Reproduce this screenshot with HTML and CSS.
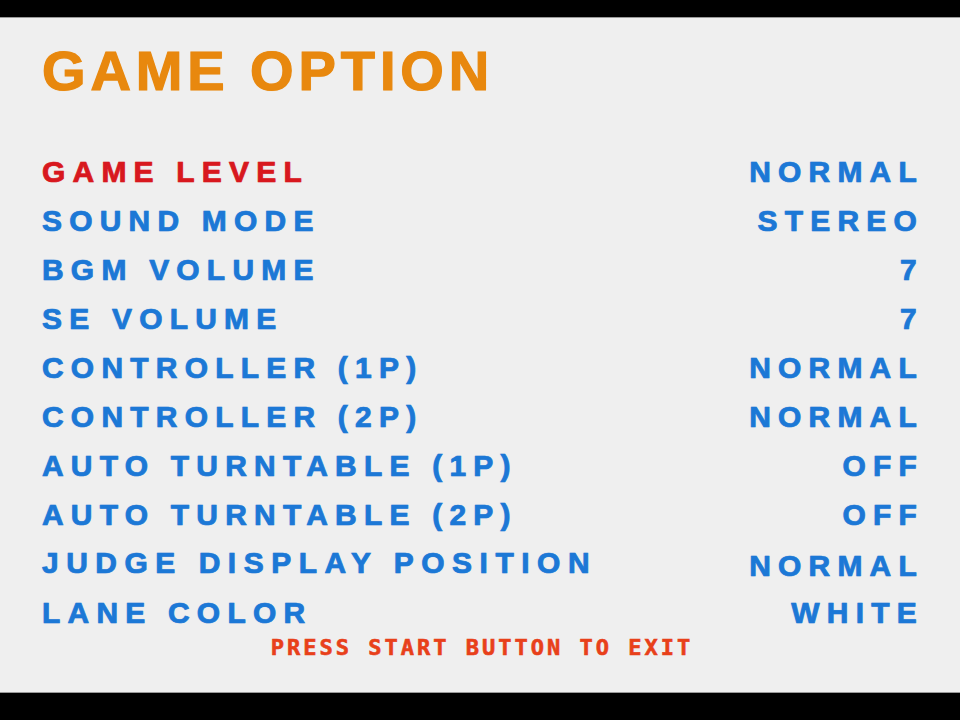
FILE: index.html
```html
<!DOCTYPE html>
<html lang="en">
<head>
<meta charset="utf-8">
<title>Game Option</title>
<link rel="stylesheet" href="styles.css">
</head>
<body>
<div class="frame">
  <div class="bar bar-top"></div>
  <main class="screen">
    <h1 class="title">GAME OPTION</h1>
    <ul class="options">
      <li class="row active"><span class="label">GAME LEVEL</span><span class="value">NORMAL</span></li>
      <li class="row"><span class="label">SOUND MODE</span><span class="value">STEREO</span></li>
      <li class="row"><span class="label">BGM VOLUME</span><span class="value">7</span></li>
      <li class="row"><span class="label">SE VOLUME</span><span class="value">7</span></li>
      <li class="row"><span class="label">CONTROLLER (1P)</span><span class="value">NORMAL</span></li>
      <li class="row"><span class="label">CONTROLLER (2P)</span><span class="value">NORMAL</span></li>
      <li class="row"><span class="label">AUTO TURNTABLE (1P)</span><span class="value">OFF</span></li>
      <li class="row"><span class="label">AUTO TURNTABLE (2P)</span><span class="value">OFF</span></li>
      <li class="row"><span class="label label-raised">JUDGE DISPLAY POSITION</span><span class="value value-lowered">NORMAL</span></li>
      <li class="row"><span class="label">LANE COLOR</span><span class="value">WHITE</span></li>
    </ul>
    <p class="hint">PRESS START BUTTON TO EXIT</p>
  </main>
  <div class="bar bar-bottom"></div>
</div>
</body>
</html>
```

FILE: styles.css
```css
* { box-sizing: border-box; }

html, body {
  margin: 0;
  padding: 0;
  background: #000;
}

.frame {
  width: 960px;
  height: 720px;
  display: flex;
  flex-direction: column;
  background: #000;
}

.bar-top { height: 18px; background: #000; border-bottom: 1px solid #9a9a9a; }
.bar-bottom { height: 28px; background: #000; border-top: 1px solid #9a9a9a; }

.screen {
  flex: 1;
  background: #efefef;
  padding: 24px 36px 0 42px;
  font-family: "Liberation Sans", Arial, sans-serif;
  font-weight: bold;
}

.title {
  margin: 0;
  font-size: 56px;
  line-height: 58px;
  letter-spacing: 4.9px;
  color: #e8880e;
  font-weight: bold;
  -webkit-text-stroke: 1.2px #e8880e;
  text-shadow: 0 0 1px rgba(232, 136, 14, 0.6);
}

.options {
  list-style: none;
  margin: 47px 0 0 0;
  padding: 0;
}

.row {
  display: flex;
  justify-content: space-between;
  height: 49px;
  font-size: 30px;
  line-height: 49px;
  letter-spacing: 7.2px;
  color: #1c78d6;
  -webkit-text-stroke: 0.7px currentColor;
  text-shadow: 0 0 1px rgba(28, 120, 214, 0.6);
}

.row.active .label {
  color: #d8181e;
  text-shadow: 0 0 1px rgba(216, 24, 30, 0.6);
}

.label-raised { position: relative; top: -1px; letter-spacing: 7.5px; }
.value-lowered { position: relative; top: 2px; }

.hint {
  margin: 0;
  text-align: center;
  font-family: "DejaVu Sans Mono", "Liberation Mono", monospace;
  font-weight: bold;
  font-size: 22px;
  line-height: 22px;
  letter-spacing: 3px;
  color: #e8401a;
  margin-left: -2px;
  -webkit-text-stroke: 0.6px #e8401a;
}
```
